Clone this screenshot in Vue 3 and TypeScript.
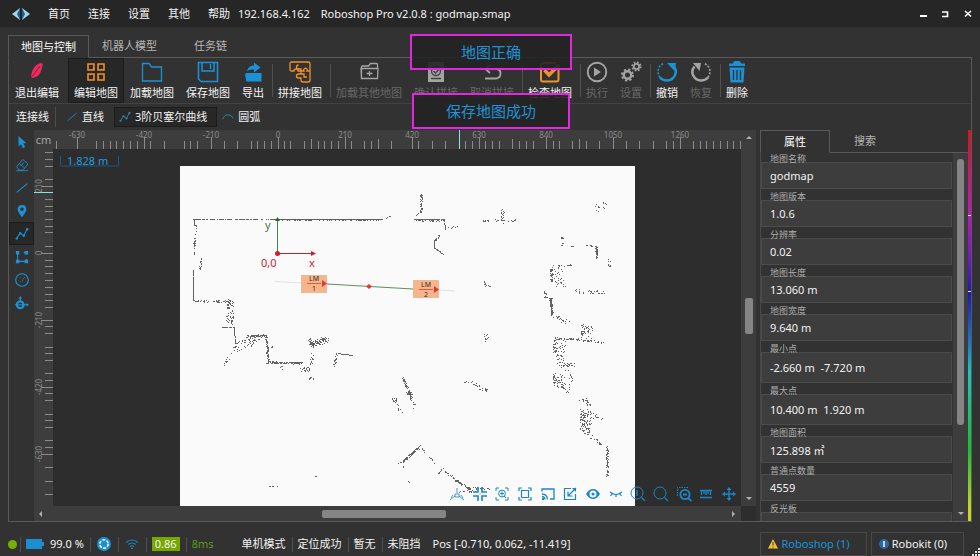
<script setup lang="ts">
import { ref } from 'vue'

interface Tool {
  id: string
  label?: string
  icon?: string
  tone?: string
  sep?: boolean
}

const menus: string[] = ['首页', '连接', '设置', '其他', '帮助']
const tabs: string[] = ['地图与控制', '机器人模型', '任务链']
const activeTab = ref(0)
const activeTool = ref('edit')
const activeSide = ref(4)
const panelTab = ref(0)

const icons: Record<string, string> = {
  exit: '<path fill="currentColor" d="M15.500 2c1 0 1.400 1 1 3l-1.500 5c-1 3-2.500 4.500-4.500 5.500L7 17H5C5 12 7 7 10 4.500 12 3 13.500 2 15.500 2z"/><path d="M5 17 14 5" stroke="#8f1c3d" fill="none"/>',
  edit: '<g fill="none" stroke="currentColor" stroke-width="1.600"><path d="M3 3h6v3.500q-1 .5 0 1v1.500H3zM13 3h6v6h-2q-.5-1-1 0h-3zM3 13h2q.5 1 1 0h3v6H3zM13 13h6v6h-6v-2q1-.5 0-1z"/></g>',
  load: '<path fill="none" stroke="currentColor" stroke-width="1.300" d="M1.500 2.500h6.500l2.500 3.500h10v14h-19z"/>',
  save: '<path fill="none" stroke="currentColor" stroke-width="1.500" d="M1.500 1.500h19v19H4l-2.500-2.500zM5 1.500v8.500h12V1.500M13.500 3v5"/>',
  export: '<path fill="currentColor" d="M4 12h15.500v8.500H4.500L3 14z"/><path fill="currentColor" d="M5 10.500C6 6 9 4.500 12 4.500V1.500l6.500 5-6.500 5v-3c-3 0-5 0-7 2z"/>',
  splice: '<path fill="none" stroke="currentColor" stroke-width="1.300" d="M2.500 1H19q2 0 2 2v16q0 2-2 2h-5q-2 0-2-2v-2H9.500a2 2 0 1 1 0-4H12v-3H9a2 2 0 1 0-4 0H2.500Q1 10 1 8.500V2.500Q1 1 2.500 1zM12 10V8H9.500a2 2 0 1 1 0-4M12 10h3a1.800 1.800 0 1 1 3 0h3M12 13h3v3h3"/>',
  loadOther: '<path fill="none" stroke="currentColor" stroke-width="1.300" d="M3.500 17.500V6q0-1 1-1h6l2-2.500h6q1 0 1 1V7M3 7.500h17l-.5 10H3.500zM8.500 12.500h6M11.500 10v5"/>',
  confirm: '<path fill="currentColor" d="M3 1h16v20H3z"/><circle cx="11" cy="10" r="4.500" fill="none" stroke="#444" stroke-width="1.400"/><path d="m8.500 10 2 2 5-5M6 17.500h10" stroke="#444" stroke-width="1.400" fill="none"/>',
  cancel: '<path fill="none" stroke="currentColor" stroke-width="1.800" d="M6 8h9q4.500 0 4.500 4.500T15 17.500H4M9 4 4.500 8 9 12"/>',
  check: '<path fill="none" stroke="currentColor" stroke-width="2" d="M19.500 9v9.500q0 2-2 2H4q-2 0-2-2V4q0-2 2-2h13"/><path fill="none" stroke="currentColor" stroke-width="3.500" d="m5.500 9 4.500 5L20 4"/>',
  run: '<circle cx="11" cy="11" r="9.300" fill="none" stroke="currentColor" stroke-width="1.900"/><path fill="currentColor" d="M8 6.500v9l7-4.500z"/>',
  gear: '<g fill="none" stroke="currentColor"><circle cx="7.500" cy="14" r="3.700" stroke-width="2.400"/><circle cx="7.500" cy="14" r="5.500" stroke-width="2" stroke-dasharray="2.200 2.120"/><circle cx="16.500" cy="5.500" r="2.700" stroke-width="1.800"/><circle cx="16.500" cy="5.500" r="4.200" stroke-width="1.800" stroke-dasharray="1.700 1.600"/></g>',
  undo: '<path fill="none" stroke="currentColor" stroke-width="2.500" d="M18 5.500q3 4 1 8.500-2.500 5.500-8 5.500-4.500 0-7-3"/><path fill="none" stroke="currentColor" stroke-width="1.600" stroke-dasharray="2 1.500" d="M4 16.500Q1 12 2.500 7.500 4.500 3.500 8 2.500"/><path fill="currentColor" d="M11 2h9l-1.500 8z"/>',
  redo: '<path fill="none" stroke="currentColor" stroke-width="2.500" d="M4.500 5.500q-3.500 4-1.500 8.500 2.500 5.500 8 5.500 4.500 0 7-3"/><path fill="none" stroke="currentColor" stroke-width="1.600" stroke-dasharray="2 1.500" d="M18 16.500q3-4.500 1.500-9-2-4-5.500-5"/><path fill="currentColor" d="M3 2h8l-1.500 8z"/>',
  trash: '<path fill="currentColor" d="M7 2.500Q7 0 9 0h4q2 0 2 2.500h4V5H3V2.500zM3.500 6.500h15l-1 15h-13z"/><path d="M7.500 9v10M11 9v10M14.500 9v10" stroke="#323232" stroke-width="1.300"/>',
  line: '<path fill="none" stroke="currentColor" stroke-width="1.200" d="M2 13 14 3"/>',
  curve: '<path fill="none" stroke="currentColor" stroke-width="1.200" d="M2 13 6 7l4 3 4-8"/><g fill="currentColor"><circle cx="2" cy="13" r="1.400"/><circle cx="6" cy="7" r="1.400"/><circle cx="10" cy="10" r="1.400"/><circle cx="14" cy="2.500" r="1.400"/></g>',
  arc: '<path fill="none" stroke="currentColor" stroke-width="1.200" d="M1 11Q3 5 8 5t7 5"/>',
  pointer: '<path fill="currentColor" d="M4 1v12l3-2.500 2 4.500 2.500-1.200L9.500 9.500H13z"/>',
  eraser: '<path fill="none" stroke="currentColor" d="m2 10 6-7.500q1-1 2 0l4 3.500q1 1 0 2l-5 6H5zM5 6.500l6 5M7 9l3-4M1.500 14.500H15"/>',
  pin: '<path fill="currentColor" fill-rule="evenodd" d="M8 1q5 0 5 5Q13 9 8 15 3 9 3 6 3 1 8 1zM8 4a2 2 0 1 0 0 4 2 2 0 0 0 0-4z"/>',
  region: '<path fill="none" stroke="currentColor" stroke-width="1.200" d="M3 3v10h10M10 3h3M13 10v3"/><g fill="currentColor"><path d="M1 1h4v4H1zM11 1h4v4h-4zM1 11h4v4H1zM11 11h4v4h-4z"/></g>',
  round: '<circle cx="8" cy="8" r="7.200" fill="none" stroke="currentColor" stroke-width="1.300"/><path d="M5.500 5.500h1M9 7l2-2M8 9h1M6 10h1" stroke="currentColor" fill="none"/>',
  place: '<circle cx="6" cy="10" r="3.800" fill="none" stroke="currentColor" stroke-width="2.600"/><path fill="none" stroke="currentColor" stroke-width="1.200" d="M6 6V2M0 10h15"/><path fill="currentColor" d="M6 0 4 3h4zM16 10l-3-2v4z"/>',
  robot: '<path fill="none" stroke="currentColor" opacity=".8" d="M8 2v5M1 14l5-4M15 14l-5-4M6 8h4v3H6zM4 9l-2 3M12 9l2 3"/>',
  compress: '<path fill="none" stroke="currentColor" stroke-width="1.600" d="M6 1v5H1M10 1v5h5M6 15v-5H1M10 15v-5h5"/><path fill="currentColor" d="M7.500 7.500h1v1h-1z"/>',
  focus: '<path fill="none" stroke="currentColor" d="M2 5V2h3M11 2h3v3M14 11v3h-3M5 14H2v-3M8 5.500v4M6 7.500h4M10 10l2 2"/><circle cx="8" cy="7.500" r="3.400" fill="none" stroke="currentColor"/>',
  fit: '<path fill="none" stroke="currentColor" stroke-width="1.200" d="M2 5V2h3M11 2h3v3M14 11v3h-3M5 14H2v-3M4.500 4.500h7v7h-7z"/>',
  cast: '<path fill="none" stroke="currentColor" stroke-width="1.300" d="M2 5.500V3h12v10h-4M2 8q5 0 5.500 5.500M2 10.500q2.500 0 3 3"/><path fill="currentColor" d="M2 12h2v2H2z"/>',
  resize: '<path fill="none" stroke="currentColor" stroke-width="1.200" d="M9 2.500H2.500v11h11V8M14 2 6.500 9.500M6 5.500V10h4.500"/><path fill="currentColor" d="M10 2h4v4z"/>',
  eye: '<path fill="currentColor" fill-rule="evenodd" d="M1 8q3-5 7-5t7 5q-3 5-7 5T1 8zm7-3.500a3.500 3.500 0 1 0 0 7 3.500 3.500 0 0 0 0-7zM8 6.500a1.500 1.500 0 1 1 0 3 1.500 1.500 0 0 1 0-3z"/>',
  lash: '<path fill="none" stroke="currentColor" stroke-width="1.200" d="M2 6q6 5 12 0M4 8l-1.500 2M8 9v2M12 8l1.500 2"/>',
  zoomOne: '<circle cx="7" cy="7" r="6" fill="none" stroke="currentColor"/><path fill="none" stroke="currentColor" stroke-width="1.300" d="M7 4v6M11.500 11.500 15 15"/>',
  zoom: '<circle cx="7" cy="7" r="6" fill="none" stroke="currentColor"/><path fill="none" stroke="currentColor" stroke-width="1.300" d="m11.500 11.500 3.500 3.500"/>',
  zoomArea: '<path fill="none" stroke="currentColor" stroke-dasharray="1.500 1" d="M1.500 10V1.500H13"/><circle cx="9" cy="8.500" r="4.600" fill="none" stroke="currentColor" stroke-width="1.900"/><path stroke="currentColor" stroke-width="1.800" d="m12 12 3.500 3M7 8.500h4"/>',
  measure: '<path fill="none" stroke="currentColor" stroke-width="1.300" d="M2 4.500h12M2 11.500h12M3.500 5v4M8 5v4M12.500 5v4M6 5v3M10 5v3"/>',
  move: '<path fill="none" stroke="currentColor" stroke-width="1.400" d="M8 2v12M2 8h12"/><path fill="currentColor" d="m8 1 2.500 3h-5zM8 15l2.500-3h-5zM1 8l3-2.500v5zM15 8l-3-2.500v5z"/>'
}

const tools: Tool[] = [
  { id: 'exit', label: '退出编辑', icon: 'exit', tone: 'rose' },
  { id: 'edit', label: '编辑地图', icon: 'edit', tone: 'orange' },
  { id: 'load', label: '加载地图', icon: 'load', tone: 'blue' },
  { id: 'save', label: '保存地图', icon: 'save', tone: 'blue' },
  { id: 'export', label: '导出', icon: 'export', tone: 'blue' },
  { id: 's1', sep: true },
  { id: 'splice', label: '拼接地图', icon: 'splice', tone: 'orange' },
  { id: 's2', sep: true },
  { id: 'other', label: '加载其他地图', icon: 'loadOther', tone: 'off' },
  { id: 'confirm', label: '确认拼接', icon: 'confirm', tone: 'off' },
  { id: 'cancel', label: '取消拼接', icon: 'cancel', tone: 'off' },
  { id: 's3', sep: true },
  { id: 'check', label: '检查地图', icon: 'check', tone: 'orange' },
  { id: 's4', sep: true },
  { id: 'run', label: '执行', icon: 'run', tone: 'off' },
  { id: 'set', label: '设置', icon: 'gear', tone: 'off' },
  { id: 's5', sep: true },
  { id: 'undo', label: '撤销', icon: 'undo', tone: 'blue' },
  { id: 'redo', label: '恢复', icon: 'redo', tone: 'off' },
  { id: 's6', sep: true },
  { id: 'del', label: '删除', icon: 'trash', tone: 'blue' }
]

const sideTools = [
  { icon: 'pointer', name: '选择' },
  { icon: 'eraser', name: '橡皮' },
  { icon: 'line', name: '直线' },
  { icon: 'pin', name: '站点' },
  { icon: 'curve', name: '曲线' },
  { icon: 'region', name: '区域' },
  { icon: 'round', name: '圆' },
  { icon: 'place', name: '定位' }
]
const mapTools = [
  'robot', 'compress', 'focus', 'fit', 'cast', 'resize', 'eye', 'lash',
  'zoomOne', 'zoom', 'zoomArea', 'measure', 'move'
]

const props = [
  { label: '地图名称', value: 'godmap' },
  { label: '地图版本', value: '1.0.6' },
  { label: '分辨率', value: '0.02' },
  { label: '地图长度', value: '13.060 m' },
  { label: '地图宽度', value: '9.640 m' },
  { label: '最小点', value: '-2.660 m  -7.720 m', tall: true },
  { label: '最大点', value: '10.400 m  1.920 m', tall: true },
  { label: '地图面积', value: '125.898 ㎡' },
  { label: '普通点数量', value: '4559' },
  { label: '反光板', value: '' }
]

/* Horizontal ruler, measured from the left edge of the canvas */
const hLabels = [-630, -420, -210, 0, 210, 420, 630, 840, 1050, 1260].map((v, i) => ({
  text: String(v),
  pos: 23 + i * 67
}))
const hMinor = [
  3, 43, 50, 57, 63, 70, 77, 84, 97, 111, 131, 137, 144, 171, 184, 198, 204, 211, 218,
  231, 237, 251, 265, 271, 278, 285, 298, 311, 318, 325, 338, 365, 379, 392, 412, 419,
  432, 439, 446, 466, 473, 480, 500, 506, 519, 533, 546, 573, 586, 600, 613, 620, 640,
  647, 653, 660, 667, 674, 680, 687
]
const hMid = [258, 325, 459, 526]
/* Vertical ruler, measured from the top edge of the canvas */
const vLabels = [210, 0, -210, -420, -630].map((v, i) => ({ text: String(v), pos: 37 + i * 67 }))
const vMinor = [
  3, 10, 17, 30, 50, 57, 62, 70, 77, 83, 97, 111, 117, 124, 131, 138, 145, 151, 158,
  177, 184, 198, 204, 211, 224, 231, 244, 251, 265, 271, 278, 291, 298, 318, 332, 345
]

/* Laser points: [x1, y1, x2, y2, spread, count] */
type Scan = [number, number, number, number, number, number]
const scans: Scan[] = [
  [193, 219, 278, 219, 0, 100], [278, 219, 382, 219, 0, 380], [278, 220, 380, 220, 0, 50], [385, 218, 390, 216, 0, 5],
  [193, 219, 196, 228, 1, 12], [196, 230, 194, 245, 1, 16], [194, 244, 194, 255, 0, 14],
  [201, 257, 200, 269, 1, 15], [193, 269, 193, 300, 0, 90], [194, 300, 209, 301, 1, 18], [213, 301, 234, 301, 1, 34],
  [421, 194, 421, 212, 1, 34], [421, 212, 415, 215, 0, 10], [413, 219, 444, 219, 0, 70], [413, 220, 444, 220, 1, 35],
  [444, 220, 445, 229, 0, 14], [447, 227, 457, 226, 1, 7], [440, 235, 434, 241, 1, 16],
  [434, 240, 434, 248, 0, 24], [435, 248, 443, 254, 0, 22],
  [482, 221, 490, 219, 1, 8], [495, 220, 499, 220, 1, 5], [503, 208, 502, 223, 2, 20],
  [508, 220, 517, 220, 1, 8], [595, 208, 606, 205, 4, 15], [562, 237, 562, 246, 1, 10],
  [567, 245, 573, 246, 0, 4], [585, 245, 597, 246, 0, 10], [596, 247, 597, 258, 1, 34],
  [609, 259, 609, 266, 1, 11], [552, 265, 571, 265, 1, 14], [551, 267, 551, 282, 1, 40],
  [556, 268, 560, 284, 5, 32], [576, 288, 583, 293, 2, 7], [582, 292, 605, 292, 2, 20],
  [545, 291, 545, 297, 1, 10], [546, 297, 552, 298, 0, 6], [550, 298, 552, 315, 1, 90],
  [553, 315, 567, 322, 2, 22], [582, 325, 583, 337, 2, 22], [588, 326, 588, 337, 4, 24],
  [554, 338, 580, 339, 1, 34], [575, 339, 602, 342, 1, 30], [554, 340, 554, 352, 1, 18],
  [560, 340, 560, 360, 5, 50], [561, 365, 573, 364, 2, 25], [554, 372, 554, 384, 1, 22],
  [560, 374, 561, 387, 5, 30], [570, 370, 571, 393, 2, 12], [556, 385, 571, 392, 2, 12],
  [582, 399, 590, 405, 3, 20], [582, 411, 582, 430, 2, 45], [587, 409, 587, 432, 4, 55],
  [592, 415, 600, 417, 3, 12], [580, 428, 601, 444, 2, 26], [607, 445, 607, 476, 1, 65],
  [484, 281, 486, 286, 1, 8], [487, 285, 491, 286, 0, 4], [486, 335, 487, 341, 2, 12],
  [229, 303, 230, 323, 4, 60], [222, 327, 234, 327, 0, 26], [234, 328, 235, 343, 0, 38],
  [235, 343, 262, 337, 2, 35], [236, 350, 258, 341, 2, 18], [246, 336, 266, 335, 1, 60],
  [266, 335, 268, 362, 1, 70], [271, 346, 272, 347, 1, 5], [266, 362, 301, 363, 1, 120],
  [280, 366, 282, 368, 1, 5], [301, 369, 308, 369, 2, 20], [309, 338, 312, 346, 2, 25],
  [311, 344, 328, 338, 3, 75], [312, 350, 311, 365, 2, 13], [309, 378, 315, 378, 1, 8],
  [336, 353, 334, 366, 1, 18], [336, 353, 352, 355, 0, 40], [222, 363, 228, 359, 2, 9],
  [228, 357, 236, 345, 1, 7], [402, 376, 410, 394, 1, 38], [407, 393, 411, 393, 1, 13],
  [410, 394, 414, 406, 2, 18], [393, 398, 395, 401, 2, 11], [394, 400, 403, 415, 1, 9],
  [464, 379, 480, 388, 2, 15], [480, 388, 486, 390, 2, 13], [403, 460, 420, 445, 0, 42],
  [403, 462, 419, 447, 0, 30], [398, 463, 403, 461, 0, 5], [403, 461, 403, 468, 0, 6],
  [420, 448, 425, 452, 1, 7], [429, 457, 440, 469, 1, 7], [438, 473, 442, 468, 1, 8],
  [441, 469, 459, 482, 1, 20], [455, 480, 470, 489, 1, 36], [465, 488, 489, 488, 1, 22],
  [458, 491, 478, 491, 1, 12], [268, 486, 279, 486, 0, 9], [314, 476, 316, 476, 0, 2],
  [408, 481, 409, 482, 0, 2]
]

let seed = 7
function random(): number {
  seed = (seed * 16807) % 2147483647
  return seed / 2147483647
}
function scanPath(list: Scan[]): string {
  const parts: string[] = []
  for (const [x1, y1, x2, y2, spread, count] of list) {
    for (let i = 0; i < count; i++) {
      const t = random()
      const x = Math.round(x1 + (x2 - x1) * t + (random() * 2 - 1) * spread)
      const y = Math.round(y1 + (y2 - y1) * t + (random() * 2 - 1) * spread)
      parts.push(`M${x} ${y}h1v1h-1z`)
    }
  }
  return parts.join('')
}
const points = scanPath(scans)
</script>

<template>
  <div class="app">
    <header class="titlebar">
      <svg class="logo" viewBox="0 0 18 14" aria-hidden="true">
        <path fill="#9fd6ea" d="M0 7 8 1v12zM18 7l-8-6v12z" />
        <path fill="#1f5f88" d="M5 7 8 1v12zM13 7l-3-6v12z" />
      </svg>
      <nav class="menus">
        <button v-for="m in menus" :key="m" type="button">{{ m }}</button>
      </nav>
      <span class="address">192.168.4.162</span>
      <span class="title">Roboshop Pro v2.0.8 : godmap.smap</span>
      <div class="window-buttons">
        <button type="button" aria-label="最小化"><svg viewBox="0 0 8 8"><path d="M0 6h7" stroke="#fff" stroke-width="2" /></svg></button>
        <button type="button" aria-label="最大化"><svg viewBox="0 0 8 8"><path d="M0 2h5.500v4.500H0" fill="none" stroke="#fff" stroke-width="1.600" /></svg></button>
        <button type="button" aria-label="关闭"><svg viewBox="0 0 8 8"><path d="m1 1 6 5.500M7 1 1 6.500" stroke="#fff" stroke-width="1.500" /></svg></button>
      </div>
    </header>

    <div class="tabs">
      <button
        v-for="(t, i) in tabs" :key="t" type="button"
        :class="{ active: activeTab === i }" @click="activeTab = i"
      >{{ t }}</button>
      <i class="rest"></i>
    </div>

    <main class="frame">
      <div class="toolbar">
        <template v-for="t in tools" :key="t.id">
          <i v-if="t.sep" class="sep"></i>
          <button
            v-else type="button" class="tool" :class="[t.tone, t.id, { active: activeTool === t.id }]"
            :disabled="t.tone === 'off'" @click="activeTool = t.id"
          >
            <svg viewBox="0 0 22 22" v-html="icons[t.icon || '']"></svg>
            <span>{{ t.label }}</span>
          </button>
        </template>
      </div>

      <div class="modes">
        <span class="modes-name">连接线</span>
        <button type="button"><svg viewBox="0 0 16 16" v-html="icons.line"></svg>直线</button>
        <button type="button" class="active"><svg viewBox="0 0 16 16" v-html="icons.curve"></svg>3阶贝塞尔曲线</button>
        <button type="button"><svg viewBox="0 0 16 16" v-html="icons.arc"></svg>圆弧</button>
      </div>

      <div class="workspace">
        <aside class="side">
          <button
            v-for="(s, i) in sideTools" :key="s.name" type="button" :aria-label="s.name"
            :class="{ active: activeSide === i }" @click="activeSide = i"
          ><svg viewBox="0 0 16 16" v-html="icons[s.icon]"></svg></button>
        </aside>

        <section class="view">
          <div class="unit">cm</div>
          <svg class="ruler-h">
            <path v-for="x in hMinor" :key="x" :d="`M${x}.5 11v8`" />
            <path v-for="x in hMid" :key="'m' + x" :d="`M${x}.5 9v10`" />
            <g v-for="l in hLabels" :key="l.text">
              <path :d="`M${l.pos + 1}.5 7v12`" />
              <text :x="l.pos + 1" y="8">{{ l.text }}</text>
            </g>
            <path class="cursor" d="M406.500 0v19" />
          </svg>
          <div class="bar-v">
            <i class="arrow up"></i><i class="thumb"></i><i class="arrow down"></i>
          </div>
          <svg class="ruler-v">
            <path v-for="y in vMinor" :key="y" :d="`M11 ${y}.5h8`" />
            <g v-for="l in vLabels" :key="l.text">
              <path :d="`M7 ${l.pos}.5h12`" />
              <text :transform="`translate(8 ${l.pos}) rotate(-90)`">{{ l.text }}</text>
            </g>
            <path class="cursor" d="M0 43.500h19" />
          </svg>
          <div class="canvas">
            <svg class="map">
              <g transform="translate(-53 -149)">
                <rect x="180" y="166" width="455" height="340" fill="#fafafa" />
                <path :d="points" class="points" />
                <path d="M60.500 156v10h58v-10" fill="none" stroke="#23577a" />
                <text x="67" y="165" class="scale">1.828 m</text>
                <path d="M277.500 253v-34" stroke="#3d8a4a" />
                <path d="m275 221 2.500-4 2.500 4z" fill="#3d5a40" />
                <text x="265" y="229" class="axis-y">y</text>
                <path d="M277 253.500h36" stroke="#d01a24" />
                <path d="m311 251 5 2.500-5 2.500z" fill="#d01a24" />
                <circle cx="277.500" cy="253.500" r="2.500" fill="#d01a24" />
                <text x="261" y="267" class="axis-x">0,0</text>
                <text x="309" y="267" class="axis-x">x</text>
                <path d="M275 281.500 301 283M439 290l16 1" stroke="#e2e2e2" />
                <g class="station">
                  <rect x="301.500" y="275.500" width="25" height="17" />
                  <path d="M307 283.500h14" stroke="#e05a40" />
                  <path d="M322 280v7l5-3.500z" fill="#e23a2c" />
                  <text x="314" y="281">LM</text><text x="314" y="291">1</text>
                  <rect x="413.500" y="280.500" width="25" height="17" />
                  <path d="M419 289.500h14" stroke="#e05a40" />
                  <path d="M434 286v7l5-3.500z" fill="#e23a2c" />
                  <text x="426" y="287">LM</text><text x="426" y="297">2</text>
                </g>
                <path d="m327 284 86 5" stroke="#5d8f5d" />
                <path d="m366 286.500 3-2.500 3 2.500-3 2.500z" fill="#e23a2c" />
              </g>
            </svg>
            <div class="map-tools">
              <button v-for="m in mapTools" :key="m" type="button" :aria-label="m">
                <svg viewBox="0 0 16 16" v-html="icons[m]"></svg>
              </button>
            </div>
          </div>
          <div class="bar-h">
            <i class="arrow left"></i><i class="thumb"></i><i class="arrow right"></i>
          </div>
        </section>

        <section class="panel">
          <div class="panel-tabs">
            <button type="button" :class="{ active: panelTab === 0 }" @click="panelTab = 0">属性</button>
            <button type="button" :class="{ active: panelTab === 1 }" @click="panelTab = 1">搜索</button>
            <i class="rest"></i>
          </div>
          <div class="panel-body">
            <div class="props">
              <div v-for="(p, i) in props" :key="p.label" class="prop">
                <label :for="'prop' + i">{{ p.label }}</label>
                <input :id="'prop' + i" type="text" readonly :class="{ tall: p.tall }" :value="p.value" />
              </div>
            </div>
            <div class="panel-scroll"><i class="thumb"></i><i class="arrow down"></i></div>
          </div>
        </section>
        <div class="spectrum"><i></i><i></i></div>
      </div>
    </main>

    <footer class="status">
      <i class="dot"></i>
      <span class="cell battery">
        <svg viewBox="0 0 18 10"><path fill="#1d8fd1" d="M0 0h16v3h2v4h-2v3H0z" /></svg>99.0 %
      </span>
      <span class="cell round-cell">
        <svg viewBox="0 0 14 14"><circle cx="7" cy="7" r="7" fill="#1d8fd1" /><circle cx="7" cy="7" r="4.200" fill="none" stroke="#fff" stroke-width="1.500" stroke-dasharray="3 1.400" /></svg>
      </span>
      <span class="cell wifi">
        <svg viewBox="0 0 14 10" fill="none" stroke="#2383bd" stroke-width="1.200"><path d="M1 3.500q6-5 12 0M3 5.500q4-3 8 0M5 7.500q2-1.500 4 0" /><path d="M6 9.300h2" /></svg>
      </span>
      <span class="cell"><b class="badge">0.86</b></span>
      <span class="cell ping">8ms</span>
      <span class="plain">单机模式</span>
      <span class="cell">定位成功</span>
      <span class="cell">暂无</span>
      <span class="cell">未阻挡</span>
      <span class="pos">Pos [-0.710, 0.062, -11.419]</span>
      <div class="logs">
        <button type="button" class="roboshop">
          <svg viewBox="0 0 10 10"><path fill="#f5c331" d="m5 0 5 9.500H0z" /><path d="M5 3v3.500M5 7.500v1" stroke="#333" /></svg>Roboshop (1)
        </button>
        <button type="button" class="robokit">
          <svg viewBox="0 0 10 10"><circle cx="5" cy="5" r="5" fill="#2a66a8" /><path d="M5 2v6" stroke="#fff" stroke-width="1.500" /></svg>Robokit (0)
        </button>
      </div>
      <svg class="grip" viewBox="0 0 8 8" fill="#ddd"><path d="M6 0h2v2H6zM3 3h2v2H3zM6 3h2v2H6zM0 6h2v2H0zM3 6h2v2H3zM6 6h2v2H6z" /></svg>
    </footer>

    <div class="toasts" role="status">
      <p class="wide">地图正确</p>
      <p>保存地图成功</p>
    </div>
  </div>
</template>

<style>
body {
  margin: 0;
  background: #323232;
}
</style>

<style scoped>
.app {
  position: relative;
  display: flex;
  flex-direction: column;
  height: 100vh;
  background: #323232;
  color: #f2f2f2;
  font: 11px/14px "Noto Sans", "Noto Sans CJK SC", sans-serif;
  overflow: hidden;
  white-space: nowrap;
}
button {
  font: inherit;
  color: inherit;
  background: none;
  border: 0;
  padding: 0;
  margin: 0;
}
svg {
  display: block;
}
.blue {
  color: #1b92d6;
}
.orange {
  color: #f0922b;
}
.rose {
  color: #ee2a5f;
}
.off {
  color: #a4a4a4;
}

/* Title bar */
.titlebar {
  display: flex;
  align-items: center;
  height: 27px;
  flex: none;
  padding: 0 8px 0 12px;
  background: #262626;
  box-sizing: border-box;
}
.logo {
  width: 18px;
  height: 14px;
  margin-right: 18px;
}
.menus {
  display: flex;
  gap: 18px;
}
.address {
  margin-left: 8px;
}
.title {
  margin-left: 11px;
}
.window-buttons {
  display: flex;
  gap: 14px;
  margin-left: auto;
}
.window-buttons svg {
  width: 8px;
  height: 8px;
}

/* Page tabs */
.tabs {
  display: flex;
  flex: none;
  margin: 8px 8px 0;
  height: 23px;
}
.tabs button {
  width: 81px;
  box-sizing: border-box;
  border-bottom: 1px solid #5a5a5a;
  color: #b5b5b5;
}
.tabs .active {
  border: 1px solid #5a5a5a;
  border-bottom-color: transparent;
  color: #fff;
}
.tabs .rest {
  flex: 1;
  border-bottom: 1px solid #5a5a5a;
}
.frame {
  display: flex;
  flex-direction: column;
  flex: 1;
  min-height: 0;
  margin: 0 8px;
  border: 1px solid #5a5a5a;
  border-top: 0;
}

/* Toolbar */
.toolbar {
  display: flex;
  flex: none;
  border-bottom: 1px solid #424242;
}
.tool {
  display: flex;
  flex-direction: column;
  align-items: center;
  gap: 3px;
  padding: 3px 6px 3px;
}
.tool svg {
  width: 22px;
  height: 22px;
}
.tool span {
  color: #f4f4f4;
}
.tool.off span {
  color: #686868;
}
.tool.edit {
  margin-left: 3px;
}
.tool.active {
  background: #272727;
  box-shadow: inset 0 0 0 1px #1c1c1c;
}
.sep {
  width: 1px;
  margin: 6px -1px 6px 2px;
  background: #505050;
}

/* Connection line modes */
.modes {
  display: flex;
  align-items: center;
  flex: none;
  height: 26px;
  padding-left: 7px;
}
.modes-name {
  padding-right: 6px;
  line-height: 20px;
  border-right: 1px solid #4c4c4c;
}
.modes button {
  display: flex;
  align-items: center;
  gap: 4px;
  height: 20px;
  padding: 0 10px;
}
.modes .active {
  padding: 0 10px 0 5px;
  background: #272727;
  box-shadow: inset 0 0 0 1px #1c1c1c;
}
.modes .active + button {
  padding-left: 5px;
}
.modes svg {
  width: 12px;
  height: 12px;
  color: #2b88b5;
}

/* Workspace */
.workspace {
  display: flex;
  flex: 1;
  min-height: 0;
}
.side {
  display: flex;
  flex-direction: column;
  width: 25px;
  flex: none;
}
.side button {
  display: flex;
  align-items: center;
  justify-content: center;
  height: 23px;
  color: #1b92d6;
}
.side svg {
  width: 14px;
  height: 14px;
}
.side .active {
  background: #272727;
  box-shadow: inset 0 0 0 1px #1c1c1c;
}
.view {
  display: grid;
  grid-template: 19px minmax(0, 1fr) 15px / 19px minmax(0, 1fr) 15px;
  flex: 1;
  min-width: 0;
  background: #2d2d2d;
}
.unit {
  background: #3d3d3d;
  color: #a5a5a5;
  line-height: 20px;
  text-align: center;
}
.ruler-h,
.ruler-v {
  width: 100%;
  height: 100%;
  background: #3d3d3d;
  overflow: visible;
  stroke: #8b8b8b;
}
.ruler-h text,
.ruler-v text {
  fill: #8b8b8b;
  stroke: none;
  font-size: 8px;
  text-anchor: middle;
}
.cursor {
  stroke: #8fe0e0;
}
.canvas {
  position: relative;
  min-height: 0;
}
.map {
  width: 100%;
  height: 100%;
}
.points {
  fill: #3c3c3c;
  opacity: 0.8;
  shape-rendering: crispEdges;
}
.scale {
  fill: #1f9ce0;
}
.axis-y {
  fill: #3d7a4a;
  font-size: 11px;
}
.axis-x {
  fill: #d01a24;
  font-size: 11px;
}
.station rect {
  fill: #f7b58c;
  stroke: #d99a70;
  stroke-dasharray: 1 1;
}
.station text {
  fill: #3a2a20;
  font-size: 7px;
  text-anchor: middle;
}
.map-tools {
  position: absolute;
  right: 4px;
  bottom: 4px;
  display: flex;
  justify-content: space-between;
  width: 288px;
  color: #1b86c6;
}
.map-tools svg {
  width: 16px;
  height: 16px;
}

/* Scroll bars */
.bar-v,
.bar-h,
.panel-scroll {
  display: flex;
  align-items: center;
  background: #3d3d3d;
}
.bar-v {
  grid-column: 3;
  grid-row: 1 / 3;
  flex-direction: column;
  justify-content: space-between;
  padding: 6px 0;
}
.bar-v .thumb {
  width: 8px;
  height: 36px;
  margin-bottom: 4px;
  border-radius: 2px;
  background: #858585;
}
.bar-h {
  grid-column: 1 / 3;
  justify-content: space-between;
  padding: 0 6px 0 5px;
}
.bar-h .thumb {
  width: 124px;
  height: 8px;
  margin-right: 6px;
  border-radius: 2px;
  background: #858585;
}
.arrow {
  border: 3px solid transparent;
}
.arrow.up {
  border-top: 0;
  border-bottom-color: #b0b0b0;
}
.arrow.down {
  border-bottom: 0;
  border-top-color: #b0b0b0;
}
.arrow.left {
  border-left: 0;
  border-right-color: #b0b0b0;
}
.arrow.right {
  border-right: 0;
  border-left-color: #b0b0b0;
}

/* Property panel */
.panel {
  display: flex;
  flex-direction: column;
  width: 208px;
  flex: none;
  margin-left: 4px;
}
.panel-tabs {
  display: flex;
  flex: none;
  height: 23px;
}
.panel-tabs button {
  width: 70px;
  box-sizing: border-box;
  border-bottom: 1px solid #5a5a5a;
  color: #b5b5b5;
}
.panel-tabs .active {
  border: 1px solid #5a5a5a;
  border-bottom-color: transparent;
  color: #fff;
}
.panel-tabs .rest {
  flex: 1;
  border-bottom: 1px solid #5a5a5a;
}
.panel-body {
  display: flex;
  flex: 1;
  min-height: 0;
}
.props {
  flex: 1;
  min-width: 0;
  overflow: hidden;
  padding-right: 1px;
  border-left: 1px solid #484848;
}
.prop {
  display: flex;
  flex-direction: column;
  margin-bottom: 2px;
}
.prop label {
  position: relative;
  margin: 0 0 -3px 9px;
  color: #adadad;
  font-size: 9px;
  line-height: 12px;
}
.prop input {
  height: 27px;
  width: 100%;
  box-sizing: border-box;
  padding: 0 8px;
  border: 1px solid #4b4b4b;
  border-radius: 0;
  background: #3d3d3d;
  color: #f2f2f2;
  font: inherit;
  outline: 0;
}
.prop input.tall {
  height: 31px;
}
.panel-scroll {
  flex-direction: column;
  justify-content: space-between;
  width: 15px;
  padding: 6px 0;
  box-sizing: border-box;
}
.panel-scroll .thumb {
  width: 7px;
  height: 266px;
  border-radius: 3px;
  background: #858585;
}
.spectrum {
  width: 3px;
  flex: none;
  display: flex;
  flex-direction: column;
  gap: 75px;
  padding-top: 85px;
  box-sizing: border-box;
  background: linear-gradient(#d01818, #c018b8 21%, #7a18c8 32%, #1c18b8 42%, #1880d0 55%, #18c8c0 62%, #18c030 82%, #c8d820 97%);
}
.spectrum i {
  height: 1px;
  background: #fff;
}

/* Status bar */
.status {
  display: flex;
  align-items: center;
  height: 34px;
  flex: none;
  padding: 10px 0 0 8px;
  box-sizing: border-box;
}
.dot {
  width: 9px;
  height: 9px;
  margin-right: 3px;
  border-radius: 50%;
  background: #76b000;
}
.cell {
  display: flex;
  align-items: center;
  height: 15px;
  margin-right: 6px;
  padding-left: 5px;
  border-left: 1px solid #505050;
}
.battery svg {
  width: 18px;
  height: 10px;
  margin-right: 6px;
}
.round-cell svg {
  width: 14px;
  height: 14px;
  margin: 0 1px;
}
.wifi svg {
  width: 14px;
  height: 10px;
  margin: 0 1px;
}
.badge {
  padding: 0 3px;
  background: #76a800;
  font-weight: 400;
}
.ping {
  color: #5c9a1c;
  margin-right: 28px;
}
.plain {
  margin-right: 6px;
}
.pos {
  margin-left: 6px;
}
.logs {
  display: flex;
  gap: 4px;
  height: 24px;
  margin-left: auto;
}
.logs button {
  display: flex;
  align-items: center;
  gap: 3px;
  border: 1px solid #484848;
}
.logs svg {
  width: 10px;
  height: 10px;
}
.logs .roboshop {
  padding: 0 16px 0 7px;
  color: #1b92d6;
}
.logs .robokit {
  padding: 0 16px 0 7px;
}
.grip {
  width: 8px;
  height: 8px;
  margin-left: 8px;
  align-self: flex-end;
}

/* Messages above the page */
.toasts {
  position: absolute;
  top: 34px;
  left: 410px;
  display: flex;
  flex-direction: column;
  align-items: center;
  gap: 23px;
}
.toasts p {
  margin: 0;
  width: 158px;
  box-sizing: border-box;
  border: 2px solid #e327e0;
  background: rgba(34, 34, 34, 0.9);
  color: #1f93d8;
  font-size: 15px;
  line-height: 32px;
  text-align: center;
}
.toasts .wide {
  width: 162px;
}
</style>
